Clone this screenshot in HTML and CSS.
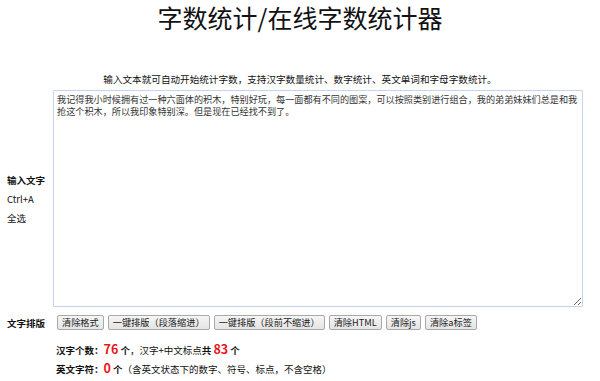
FILE: index.html
```html
<!DOCTYPE html>
<html lang="zh-CN">
<head>
<meta charset="utf-8">
<title>字数统计/在线字数统计器</title>
<link rel="stylesheet" href="styles.css">
</head>
<body>
<div class="page">
  <h1 class="title">字数统计/在线字数统计器</h1>
  <p class="intro">输入文本就可自动开始统计字数，支持汉字数量统计、数字统计、英文单词和字母字数统计。</p>
  <div class="editor-row">
    <div class="side">
      <div class="side-title">输入文字</div>
      <div class="side-item">Ctrl+A</div>
      <div class="side-item">全选</div>
    </div>
    <textarea class="input">我记得我小时候拥有过一种六面体的积木，特别好玩，每一面都有不同的图案，可以按照类别进行组合，我的弟弟妹妹们总是和我抢这个积木，所以我印象特别深。但是现在已经找不到了。</textarea>
  </div>
  <div class="tool-row">
    <div class="side-title">文字排版</div>
    <div class="buttons">
      <button class="btn">清除格式</button>
      <button class="btn">一键排版（段落缩进）</button>
      <button class="btn">一键排版（段前不缩进）</button>
      <button class="btn">清除HTML</button>
      <button class="btn">清除js</button>
      <button class="btn">清除a标签</button>
    </div>
  </div>
  <div class="stats">
    <div class="stat"><b>汉字个数：</b><span class="num">76</span><b> 个</b>，汉字+中文标点<b>共</b> <span class="num">83</span><b> 个</b></div>
    <div class="stat"><b>英文字符：</b><span class="num">0</span><b> 个</b>（含英文状态下的数字、符号、标点，不含空格）</div>
  </div>
</div>
</body>
</html>
```

FILE: styles.css
```css
* { box-sizing: border-box; }
html, body { margin: 0; padding: 0; background: #fff; }
body {
  font-family: "Noto Sans CJK SC", "Noto Sans", sans-serif;
  color: #111;
  width: 600px;
  height: 381px;
  overflow: hidden;
}
.page { width: 600px; }
.title {
  margin: 0;
  padding-top: 1px;
  font-size: 25px;
  line-height: 32px;
  font-weight: 400;
  text-align: center;
  color: #111;
}
.intro {
  margin: 39px 0 0 0;
  font-size: 9.6px;
  line-height: 14px;
  text-align: center;
  color: #111;
}
.editor-row {
  display: grid;
  grid-template-columns: 53px 530px;
  align-items: center;
  margin-top: 4px;
}
.side { padding-left: 7px; padding-top: 5px; }
.side-title {
  font-size: 9.5px;
  font-weight: 700;
  line-height: 14px;
}
.side .side-title { margin-bottom: 5px; }
.side-item {
  font-size: 9.5px;
  line-height: 14px;
  margin-bottom: 5px;
}
.input {
  display: block;
  width: 530px;
  height: 217px;
  margin: 0;
  border: 1px solid #c3d6ee;
  border-radius: 1px;
  padding: 2px 3px;
  font-family: "Noto Sans CJK SC", serif;
  font-size: 9.15px;
  line-height: 12.4px;
  color: #333;
  resize: both;
  outline: none;
}
.tool-row {
  display: grid;
  grid-template-columns: 57px auto;
  align-items: center;
  margin-top: 8px;
}
.tool-row .side-title { padding-left: 7px; }
.buttons { display: flex; gap: 4px; }
.btn {
  height: 15px;
  padding: 0 4px;
  font-family: "Noto Sans CJK SC", sans-serif;
  font-size: 9.2px;
  line-height: 13px;
  color: #222;
  background: linear-gradient(#f6f6f6, #e4e4e4);
  border: 1px solid #a9a9a9;
  border-radius: 2px;
  white-space: nowrap;
}
.stats { padding-left: 56px; margin-top: 11px; }
.stat {
  font-size: 9.5px;
  line-height: 19px;
  height: 19px;
  color: #111;
}
.stat b { font-weight: 700; }
.num {
  color: #e8141b;
  font-weight: 700;
  font-size: 12.5px;
  line-height: 1;
}
```
